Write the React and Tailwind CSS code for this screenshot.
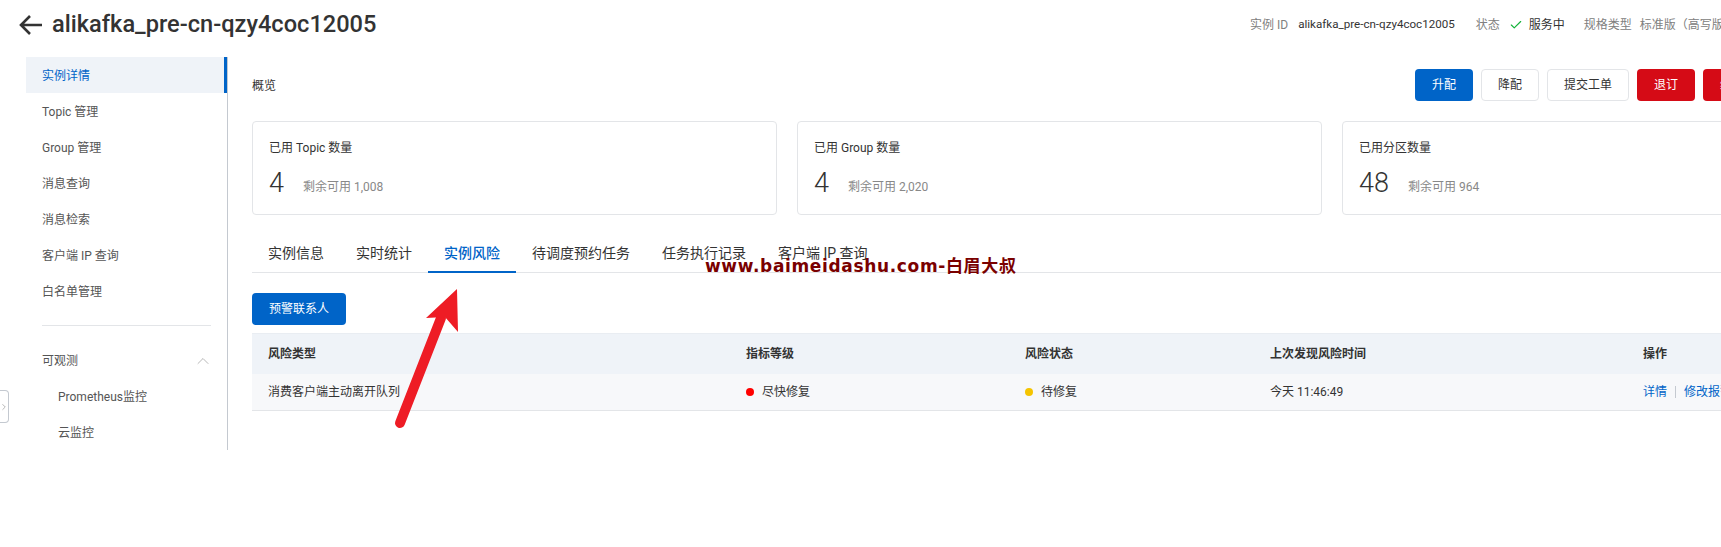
import { Check, ChevronRight, ChevronUp } from "lucide-react";

const FONT = { fontFamily: 'Roboto, "Noto Sans CJK SC", sans-serif' };

const menu = ["Topic 管理", "Group 管理", "消息查询", "消息检索", "客户端 IP 查询", "白名单管理"];

const cards = [
  { title: "已用 Topic 数量", value: "4", rest: "剩余可用 1,008" },
  { title: "已用 Group 数量", value: "4", rest: "剩余可用 2,020" },
  { title: "已用分区数量", value: "48", rest: "剩余可用 964" },
];

const tabs = ["实例信息", "实时统计", "实例风险", "待调度预约任务", "任务执行记录", "客户端 IP 查询"];

function Sidebar() {
  return (
    <aside className="ml-[26px] h-[393px] w-[202px] shrink-0 overflow-hidden border-r border-[#c4c9d0] text-xs text-[#555]">
      <div className="flex h-9 items-center border-r-[3px] border-[#0064c8] bg-[#eff3f8] pl-4 pt-[2px] text-[#0064c8]">实例详情</div>
      {menu.map((item) => (
        <div key={item} className="flex h-9 items-center pl-4 pt-[2px]">
          {item}
        </div>
      ))}
      <div className="mx-4 mt-4 border-t border-[#e3e5e8]" />
      <div className="mt-4 flex h-9 items-center justify-between pl-4 pr-[14px] pt-[2px]">
        <span>可观测</span>
        <ChevronUp className="h-5 w-5 text-[#aaa]" strokeWidth={1} />
      </div>
      <div className="flex h-9 items-center pl-8 pt-[2px]">Prometheus监控</div>
      <div className="flex h-9 items-center pl-8 pt-[2px]">云监控</div>
    </aside>
  );
}

function Toolbar() {
  return (
    <div className="flex h-8 w-[1509px] items-center text-xs">
      <span className="pt-[2px] text-[#333]">概览</span>
      <div className="ml-auto flex gap-2">
        <button className="h-8 w-[58px] rounded-sm bg-[#0064c8] text-white">升配</button>
        <button className="h-8 w-[58px] rounded-sm border border-[#e3e5e8] text-[#333]">降配</button>
        <button className="h-8 w-[82px] rounded-sm border border-[#e3e5e8] text-[#333]">提交工单</button>
        <button className="h-8 w-[58px] rounded-sm bg-[#d50b16] text-white">退订</button>
        <button className="h-8 w-[58px] rounded-sm bg-[#d50b16] text-white">续费</button>
      </div>
    </div>
  );
}

function Stats() {
  return (
    <div className="mt-5 grid w-[1615px] grid-cols-3 gap-5">
      {cards.map((card) => (
        <div key={card.title} className="h-[94px] rounded border border-[#e3e5e8] px-4 pt-[17px] text-[#333]">
          <div className="text-xs leading-[18px]">{card.title}</div>
          <div className="mt-[8px] flex items-center gap-[19px]">
            <span className="text-[27px] font-light leading-[36px]">{card.value}</span>
            <span className="mt-[8px] text-xs text-[#888]">{card.rest}</span>
          </div>
        </div>
      ))}
    </div>
  );
}

function Tabs() {
  return (
    <div className="mt-[16px] flex h-[42px] border-b border-[#e3e5e8] text-sm">
      {tabs.map((tab) => (
        <div
          key={tab}
          className={
            tab === "实例风险"
              ? "-mb-px flex h-[42px] items-center border-b-2 border-[#0064c8] px-4 pt-[3px] font-medium text-[#0064c8]"
              : "flex items-center px-4 pt-[3px] text-[#333]"
          }
        >
          {tab}
        </div>
      ))}
    </div>
  );
}

function RiskTable() {
  const cols = "grid grid-cols-[478px_279px_245px_373px_1fr] pl-4";
  return (
    <div className="mt-2 text-xs text-[#333]">
      <div className={`${cols} h-[41px] items-center border-t border-[#e9edf2] bg-[#eff3f8] font-bold`}>
        <span>风险类型</span>
        <span>指标等级</span>
        <span>风险状态</span>
        <span>上次发现风险时间</span>
        <span>操作</span>
      </div>
      <div className={`${cols} h-[37px] items-center border-b border-[#e3e5e8] bg-[#f7f8fa]`}>
        <span>消费客户端主动离开队列</span>
        <span className="flex items-center gap-2">
          <i className="h-2 w-2 rounded-full bg-[#ff0000]" />
          尽快修复
        </span>
        <span className="flex items-center gap-2">
          <i className="h-2 w-2 rounded-full bg-[#f5c400]" />
          待修复
        </span>
        <span>今天 11:46:49</span>
        <span className="flex items-center whitespace-nowrap text-[#0064c8]">
          详情
          <i className="mx-2 h-3 w-px bg-[#c4c9d0]" />
          修改报警
        </span>
      </div>
    </div>
  );
}

export default function App() {
  return (
    <div className="relative h-[547px] w-[1721px] overflow-hidden bg-white" style={FONT}>
      <header className="mb-[7px] flex h-[50px] items-center whitespace-nowrap">
        <svg className="ml-[18px] shrink-0" width="24" height="22" viewBox="0 0 24 22" fill="none" stroke="#333" strokeWidth="2.6">
          <path d="M24 11H3M12 2L3 11L12 20" />
        </svg>
        <h1 className="ml-[10px] text-[23.6px] font-medium text-[#333]">alikafka_pre-cn-qzy4coc12005</h1>
        <div className="ml-auto flex w-[471px] shrink-0 items-center text-xs">
          <span className="shrink-0 text-[#808080]">实例 ID</span>
          <span className="ml-[10px] shrink-0 text-[11.6px] text-[#333]">alikafka_pre-cn-qzy4coc12005</span>
          <span className="ml-[21px] shrink-0 text-[#808080]">状态</span>
          <Check className="ml-[9px] h-[14px] w-[14px] shrink-0 text-[#13b33a]" strokeWidth={2} />
          <span className="ml-[6px] shrink-0 text-[#333]">服务中</span>
          <span className="ml-[19px] shrink-0 text-[#808080]">规格类型</span>
          <span className="ml-[8px] shrink-0 text-[#808080]">标准版（高写版）</span>
        </div>
      </header>

      <div className="flex">
        <Sidebar />
        <main className="ml-6 min-w-0 flex-1 pt-3">
          <Toolbar />
          <Stats />
          <Tabs />
          <button className="mt-[20px] h-8 w-[94px] rounded-sm bg-[#0064c8] text-xs text-white">预警联系人</button>
          <RiskTable />
        </main>
      </div>

      {/* sidebar collapse handle */}
      <div className="absolute left-0 top-[390px] flex h-[33px] w-[9px] items-center justify-end overflow-hidden rounded-r-sm border border-l-0 border-[#c4c9d0] bg-white">
        <ChevronRight className="-mr-px h-[10px] w-[10px] shrink-0 text-[#aaa]" />
      </div>

      {/* annotations burned into the screenshot */}
      <div
        className="absolute left-[705px] top-[254px] whitespace-nowrap text-[17px] font-bold leading-6 tracking-[0.65px] text-[#7a0000]"
        style={{ fontFamily: '"DejaVu Sans", "Noto Sans CJK SC", sans-serif' }}
      >
        www.baimeidashu.com-白眉大叔
      </div>
      <svg className="absolute left-0 top-0" width="1721" height="547" fill="none">
        <path d="M441 318L400 423" stroke="#ee1c25" strokeWidth="10" strokeLinecap="round" />
        <path d="M457 289L426 318L445 317L458 332Z" fill="#ee1c25" />
      </svg>
    </div>
  );
}
